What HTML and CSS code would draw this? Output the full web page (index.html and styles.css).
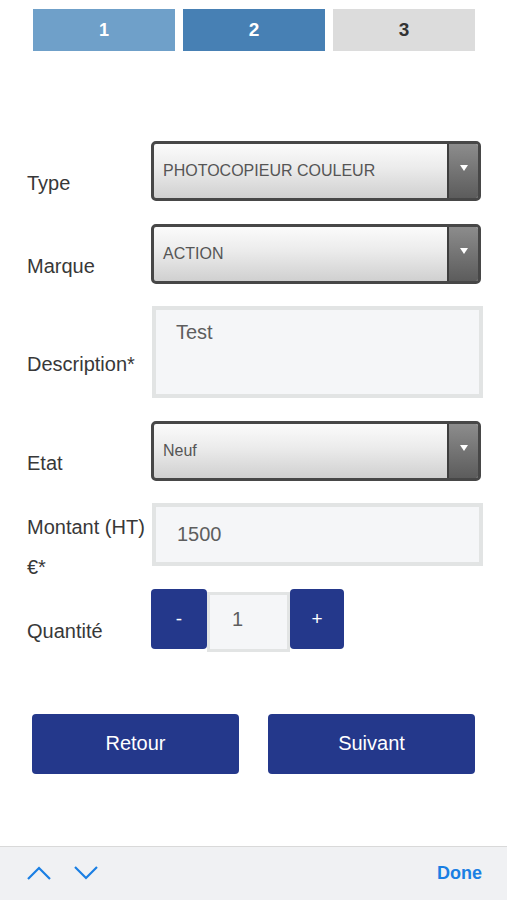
FILE: index.html
```html
<!DOCTYPE html>
<html lang="fr">

<head>
  <meta charset="UTF-8">
  <meta name="viewport" content="width=device-width, initial-scale=1.0, user-scalable=no">
  <title>Ajout matériel</title>
  <link rel="stylesheet" href="styles.css">
</head>

<body>
  <div class="steps">
    <div class="step done">1</div>
    <div class="step current">2</div>
    <div class="step">3</div>
  </div>

  <div class="form">
    <div class="label">Type</div>
    <div class="select">
      <span class="value">PHOTOCOPIEUR COULEUR</span>
      <span class="arrow"><i></i></span>
    </div>

    <div class="label">Marque</div>
    <div class="select">
      <span class="value">ACTION</span>
      <span class="arrow"><i></i></span>
    </div>

    <div class="label">Description*</div>
    <textarea class="area">Test</textarea>

    <div class="label">Etat</div>
    <div class="select">
      <span class="value">Neuf</span>
      <span class="arrow"><i></i></span>
    </div>

    <div class="label twoLines">Montant (HT) €*</div>
    <input class="field" type="text" value="1500">

    <div class="label">Quantité</div>
    <div class="qty">
      <button class="qtyBtn">-</button>
      <input class="qtyInput" type="text" value="1">
      <button class="qtyBtn">+</button>
    </div>
  </div>

  <div class="actions">
    <button class="btn">Retour</button>
    <button class="btn">Suivant</button>
  </div>

  <div class="toolbar">
    <div class="navArrows">
      <svg width="24" height="14" viewBox="0 0 24 14">
        <polyline points="1,13 12,2 23,13" fill="none" stroke="#1a7fe3" stroke-width="2.2" />
      </svg>
      <svg width="24" height="14" viewBox="0 0 24 14">
        <polyline points="1,1 12,12 23,1" fill="none" stroke="#1a7fe3" stroke-width="2.2" />
      </svg>
    </div>
    <span class="done">Done</span>
  </div>
</body>

</html>
```

FILE: styles.css
```css
* {
  margin: 0;
  padding: 0;
  box-sizing: border-box;
}
body {
  width: 507px;
  font-family: "Liberation Sans", Arial, sans-serif;
  color: #383838;
  background: #fff;
}
.steps {
  display: grid;
  grid-template-columns: repeat(3, 142px);
  gap: 8px;
  padding: 9px 0 0 33px;
}
.step {
  height: 42px;
  line-height: 42px;
  text-align: center;
  font-size: 19px;
  font-weight: bold;
  color: #333;
  background: #dcdcdc;
}
.step.done {
  background: #6fa0c9;
  color: #fff;
}
.step.current {
  background: #4780b4;
  color: #fff;
}
.form {
  display: grid;
  grid-template-columns: 124px 330px;
  row-gap: 22.6px;
  align-items: center;
  margin-top: 90px;
  padding-left: 27px;
}
.label {
  font-size: 20px;
  line-height: 40px;
  margin: 20px 0 -4px;
}
.label.twoLines {
  margin: 2px 0 -22px;
}
.select {
  display: flex;
  height: 60px;
  border: 3px solid #474747;
  border-radius: 5px;
  overflow: hidden;
  background: linear-gradient(#fbfbfb, #ebebeb 45%, #d0d0d0);
}
.select .value {
  flex: 1;
  align-self: center;
  padding-left: 9px;
  font-size: 16px;
  color: #555;
}
.select .arrow {
  width: 31px;
  border-left: 2px solid #3e3e3e;
  background: linear-gradient(#8c8c8c, #5c5c5c);
  display: flex;
  justify-content: center;
  padding-top: 21px;
}
.select .arrow i {
  width: 0;
  height: 0;
  border-left: 4px solid transparent;
  border-right: 4px solid transparent;
  border-top: 6px solid #fff;
}
.area,
.field,
.qtyInput {
  font-family: "Liberation Sans", Arial, sans-serif;
  font-size: 20px;
  color: #5e5e5e;
  background: #f5f6f8;
  border: 4px solid #e2e4e4;
  outline: none;
}
.area {
  width: 331px;
  height: 92px;
  margin-left: 1px;
  resize: none;
  padding: 10px 20px;
  line-height: 24px;
}
.field {
  width: 331px;
  height: 63px;
  margin-left: 1px;
  padding: 0 21px;
}
.qty {
  display: flex;
  align-items: flex-start;
}
.qtyBtn {
  width: 56px;
  height: 60px;
  border: none;
  border-radius: 4px;
  background: #24388b;
  color: #fff;
  font-family: "Liberation Sans", Arial, sans-serif;
  font-size: 19px;
}
.qtyBtn:last-child {
  width: 54px;
}
.qtyInput {
  width: 83px;
  height: 60px;
  margin: 3px 0 -3px;
  border-width: 3px;
  padding: 0 22px;
  line-height: 54px;
  padding-bottom: 4px;
}
.actions {
  display: flex;
  gap: 29px;
  padding-left: 32px;
  margin-top: 65px;
}
.btn {
  width: 207px;
  height: 60px;
  border: none;
  border-radius: 4px;
  background: #24388b;
  color: #fff;
  font-family: "Liberation Sans", Arial, sans-serif;
  font-size: 20px;
}
.toolbar {
  display: flex;
  justify-content: space-between;
  align-items: center;
  height: 54px;
  margin-top: 72px;
  padding: 0 25px 0 27px;
  background: #f0f1f3;
  border-top: 1px solid #d9d9d9;
}
.navArrows {
  display: flex;
  gap: 23px;
}
.navArrows svg {
  display: block;
}
.done {
  font-size: 18px;
  font-weight: bold;
  color: #1a7fe3;
}
```
